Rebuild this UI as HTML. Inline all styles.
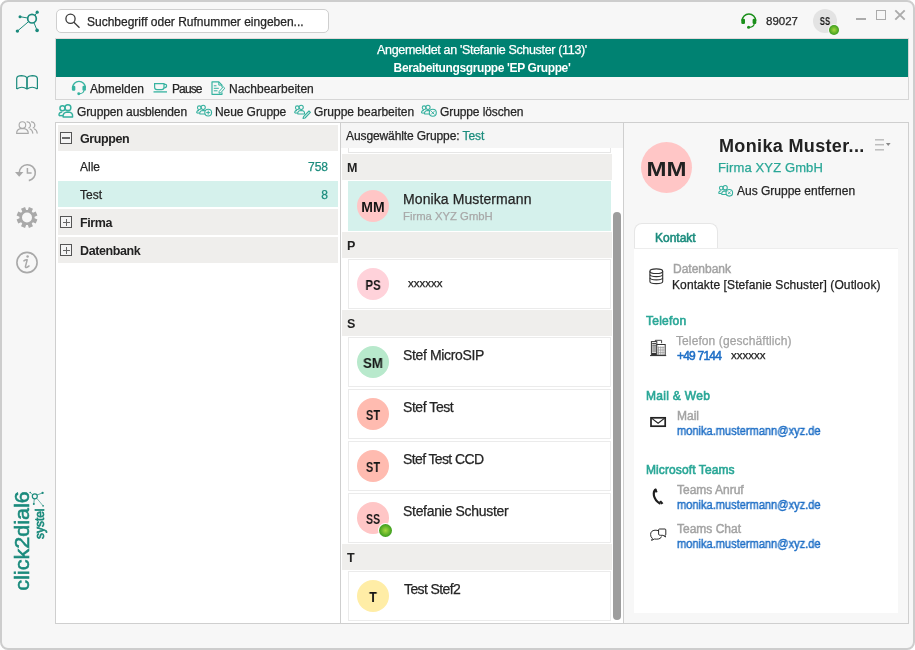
<!DOCTYPE html>
<html><head><meta charset="utf-8">
<style>
*{margin:0;padding:0;box-sizing:border-box}
html,body{width:915px;height:650px;overflow:hidden;background:#fff}
body{font-family:"Liberation Sans",sans-serif;position:relative}
#win{position:absolute;left:0;top:0;width:915px;height:650px;border:2px solid #cdcdcd;border-radius:8px;background:#f7f7f7;overflow:hidden}
.a{position:absolute}
.t{position:absolute;white-space:nowrap;line-height:1;will-change:transform;-webkit-text-stroke-width:0.25px}
.t[style*="font-weight:bold"]{-webkit-text-stroke-width:0}
.box{position:absolute}
svg{position:absolute;overflow:visible}
</style></head><body>
<div id="win"></div>

<!-- search -->
<div class="box" style="left:55.5px;top:9px;width:273.5px;height:24px;border:1px solid #cfcfcf;border-radius:5px;background:#fff"></div>
<svg style="left:0;top:0" width="915" height="40">
  <circle cx="70.5" cy="18.8" r="4.6" fill="none" stroke="#3a3a3a" stroke-width="1.3"/>
  <line x1="73.9" y1="22.3" x2="79.5" y2="27.7" stroke="#3a3a3a" stroke-width="1.3"/>
</svg>
<div class="t" style="left:87px;top:15.8px;font-size:12px;color:#252525">Suchbegriff oder Rufnummer eingeben...</div>

<!-- right header -->
<div class="t" style="left:766px;top:15.8px;font-size:11.5px;color:#252525">89027</div>
<div class="box" style="left:813px;top:9px;width:24px;height:24px;border-radius:50%;background:#e3e3e3"></div>
<div class="t" style="left:813px;width:24px;text-align:center;top:16.5px;font-size:10px;font-weight:bold;color:#151515;transform:scaleX(0.76)">SS</div>
<div class="box" style="left:828.1px;top:23.9px;width:12px;height:12px;border-radius:50%;background:#f7f7f7"></div>
<div class="box" style="left:829.1px;top:24.9px;width:10px;height:10px;border-radius:50%;background:radial-gradient(circle at 50% 50%,#a6d83e 0%,#62b22a 45%,#1f8f12 90%)"></div>
<!-- window controls -->
<div class="box" style="left:856px;top:18px;width:10px;height:2px;background:#ababab"></div>
<div class="box" style="left:876px;top:10px;width:10px;height:10px;border:1px solid #ababab"></div>
<svg style="left:0;top:0" width="915" height="40">
  <path d="M895.3 10.3 L904.7 19.7 M904.7 10.3 L895.3 19.7" stroke="#ababab" stroke-width="1.9" fill="none"/>
</svg>

<!-- banner + toolbar -->
<div class="box" style="left:55px;top:38px;width:854px;height:62px;border:1px solid #d6d6d6;border-top-color:#e6dada;background:#f7f7f7"></div>
<div class="box" style="left:56px;top:39px;width:852px;height:38px;background:#008272"></div>
<div class="t" style="left:56px;width:852px;text-align:center;top:44.4px;font-size:12.5px;letter-spacing:-0.33px;color:#fff">Angemeldet an 'Stefanie Schuster (113)'</div>
<div class="t" style="left:56px;width:852px;text-align:center;top:62px;font-size:12px;font-weight:bold;letter-spacing:-0.38px;color:#fff">Berabeitungsgruppe 'EP Gruppe'</div>

<div class="t" style="left:90px;top:83.3px;font-size:12px;color:#252525">Abmelden</div>
<div class="t" style="left:171.5px;top:83.3px;font-size:12px;letter-spacing:-0.9px;color:#252525">Pause</div>
<div class="t" style="left:229px;top:83.3px;font-size:12px;color:#252525">Nachbearbeiten</div>

<div class="t" style="left:77px;top:105.8px;font-size:12px;letter-spacing:-0.12px;color:#252525">Gruppen ausblenden</div>
<div class="t" style="left:215px;top:105.8px;font-size:12px;letter-spacing:-0.08px;color:#252525">Neue Gruppe</div>
<div class="t" style="left:313.5px;top:105.8px;font-size:12px;color:#252525">Gruppe bearbeiten</div>
<div class="t" style="left:440px;top:105.8px;font-size:12px;letter-spacing:-0.1px;color:#252525">Gruppe löschen</div>

<!-- main panel -->
<div class="box" style="left:55px;top:122px;width:854px;height:502px;border:1px solid #cfcfcf;background:#fff"></div>
<div class="box" style="left:340px;top:123px;width:1px;height:500px;background:#cfcfcf"></div>
<div class="box" style="left:623px;top:123px;width:1px;height:500px;background:#cfcfcf"></div>
<div class="box" style="left:624px;top:123px;width:284px;height:500px;background:#f7f7f7"></div>

<!-- left panel -->
<div class="box" style="left:58px;top:125px;width:280px;height:26px;background:#efeeec"></div>
<div class="box" style="left:58px;top:181px;width:280px;height:26px;background:#d5f1ec"></div>
<div class="box" style="left:58px;top:209px;width:280px;height:26px;background:#efeeec"></div>
<div class="box" style="left:58px;top:237px;width:280px;height:26px;background:#efeeec"></div>
<div class="t" style="left:79.5px;top:133px;font-size:12.5px;font-weight:bold;letter-spacing:-0.4px;color:#222">Gruppen</div>
<div class="t" style="left:80px;top:160.8px;font-size:12px;color:#252525">Alle</div>
<div class="t" style="left:288px;width:40px;text-align:right;top:160.8px;font-size:12px;color:#1b8c7d">758</div>
<div class="t" style="left:80px;top:189.1px;font-size:12px;color:#252525">Test</div>
<div class="t" style="left:288px;width:40px;text-align:right;top:189.1px;font-size:12px;color:#1b8c7d">8</div>
<div class="t" style="left:79.5px;top:216.9px;font-size:12.5px;font-weight:bold;letter-spacing:-0.4px;color:#222">Firma</div>
<div class="t" style="left:79.5px;top:244.9px;font-size:12.5px;font-weight:bold;letter-spacing:-0.4px;color:#222">Datenbank</div>


<div class="box" style="left:60px;top:132px;width:12px;height:12px;border:1px solid #555;background:#f4f4f4"></div>
<div class="box" style="left:62.3px;top:137.2px;width:7.5px;height:1.6px;background:#6a6a6a"></div>
<div class="box" style="left:60px;top:216px;width:12px;height:12px;border:1px solid #555;background:#f4f4f4"></div>
<div class="box" style="left:62.5px;top:221.5px;width:7px;height:1.1px;background:#666"></div>
<div class="box" style="left:65.5px;top:218.5px;width:1.1px;height:7px;background:#666"></div>
<div class="box" style="left:60px;top:244px;width:12px;height:12px;border:1px solid #555;background:#f4f4f4"></div>
<div class="box" style="left:62.5px;top:249.5px;width:7px;height:1.1px;background:#666"></div>
<div class="box" style="left:65.5px;top:246.5px;width:1.1px;height:7px;background:#666"></div>

<!-- middle panel -->
<div class="box" style="left:341px;top:123px;width:282px;height:25px;background:#f5f5f5"></div>
<div class="t" style="left:346px;top:129.8px;font-size:12px;letter-spacing:-0.1px;color:#252525">Ausgewählte Gruppe: <span style="color:#1b8c7d">Test</span></div>


<!-- list -->
<div class="box" style="left:348px;top:148px;width:263px;height:5px;border:1px solid #e6e6e6;border-top:none"></div>
<div class="box" style="left:342px;top:154px;width:270px;height:26px;background:#efeeec"></div>
<div class="t" style="left:347.3px;top:162px;font-size:12.5px;font-weight:bold;color:#222">M</div>
<div class="box" style="left:348px;top:181px;width:263px;height:50px;background:#d5f1ec;border:1px solid #d5f1ec"></div>
<div class="box" style="left:357px;top:190px;width:32px;height:32px;border-radius:50%;background:#ffc6c6"></div>
<div class="t" style="left:357px;width:32px;text-align:center;top:200.15px;font-size:14px;font-weight:bold;color:#151515;transform:scaleX(1.0)">MM</div>
<div class="t" style="left:402.8px;top:191.7px;font-size:14px;letter-spacing:0.1px;color:#252525">Monika Mustermann</div>
<div class="t" style="left:402.8px;top:210.5px;font-size:11.3px;color:#a8a8a8">Firma XYZ GmbH</div>
<div class="box" style="left:342px;top:232px;width:270px;height:26px;background:#efeeec"></div>
<div class="t" style="left:347.3px;top:240px;font-size:12.5px;font-weight:bold;color:#222">P</div>
<div class="box" style="left:348px;top:259px;width:263px;height:50px;background:#fff;border:1px solid #ebebeb"></div>
<div class="box" style="left:357px;top:268px;width:32px;height:32px;border-radius:50%;background:#ffd2da"></div>
<div class="t" style="left:357px;width:32px;text-align:center;top:278.15px;font-size:14px;font-weight:bold;color:#151515;transform:scaleX(0.82)">PS</div>
<div class="t" style="left:407.5px;top:278.3px;font-size:11.5px;color:#222">xxxxxx</div>
<div class="box" style="left:342px;top:310px;width:270px;height:26px;background:#efeeec"></div>
<div class="t" style="left:347.3px;top:318px;font-size:12.5px;font-weight:bold;color:#222">S</div>
<div class="box" style="left:348px;top:337px;width:263px;height:50px;background:#fff;border:1px solid #ebebeb"></div>
<div class="box" style="left:357px;top:346px;width:32px;height:32px;border-radius:50%;background:#b8e9cc"></div>
<div class="t" style="left:357px;width:32px;text-align:center;top:356.15px;font-size:14px;font-weight:bold;color:#151515;transform:scaleX(0.95)">SM</div>
<div class="t" style="left:402.8px;top:347.7px;font-size:14px;letter-spacing:-0.35px;color:#252525">Stef MicroSIP</div>
<div class="box" style="left:348px;top:389px;width:263px;height:50px;background:#fff;border:1px solid #ebebeb"></div>
<div class="box" style="left:357px;top:398px;width:32px;height:32px;border-radius:50%;background:#ffbbb0"></div>
<div class="t" style="left:357px;width:32px;text-align:center;top:408.15px;font-size:14px;font-weight:bold;color:#151515;transform:scaleX(0.79)">ST</div>
<div class="t" style="left:402.8px;top:399.7px;font-size:14px;letter-spacing:-0.44px;color:#252525">Stef Test</div>
<div class="box" style="left:348px;top:441px;width:263px;height:50px;background:#fff;border:1px solid #ebebeb"></div>
<div class="box" style="left:357px;top:450px;width:32px;height:32px;border-radius:50%;background:#ffbbb0"></div>
<div class="t" style="left:357px;width:32px;text-align:center;top:460.15px;font-size:14px;font-weight:bold;color:#151515;transform:scaleX(0.79)">ST</div>
<div class="t" style="left:402.8px;top:451.7px;font-size:14px;letter-spacing:-0.62px;color:#252525">Stef Test CCD</div>
<div class="box" style="left:348px;top:493px;width:263px;height:50px;background:#fff;border:1px solid #ebebeb"></div>
<div class="box" style="left:357px;top:502px;width:32px;height:32px;border-radius:50%;background:#ffc6c6"></div>
<div class="t" style="left:357px;width:32px;text-align:center;top:512.15px;font-size:14px;font-weight:bold;color:#151515;transform:scaleX(0.76)">SS</div>
<div class="box" style="left:377.5px;top:522.5px;width:15px;height:15px;border-radius:50%;background:#fff"></div>
<div class="box" style="left:378.5px;top:523.5px;width:13px;height:13px;border-radius:50%;background:radial-gradient(circle at 50% 50%,#a6d83e 0%,#62b22a 45%,#1f8f12 90%)"></div>
<div class="t" style="left:402.8px;top:503.7px;font-size:14px;letter-spacing:-0.3px;color:#252525">Stefanie Schuster</div>
<div class="box" style="left:342px;top:544px;width:270px;height:26px;background:#efeeec"></div>
<div class="t" style="left:347.3px;top:552px;font-size:12.5px;font-weight:bold;color:#222">T</div>
<div class="box" style="left:348px;top:571px;width:263px;height:50px;background:#fff;border:1px solid #ebebeb"></div>
<div class="box" style="left:357px;top:580px;width:32px;height:32px;border-radius:50%;background:#ffeda6"></div>
<div class="t" style="left:357px;width:32px;text-align:center;top:590.15px;font-size:14px;font-weight:bold;color:#151515;transform:scaleX(0.88)">T</div>
<div class="t" style="left:403.8px;top:581.7px;font-size:14px;letter-spacing:-0.6px;color:#252525">Test Stef2</div>
<div class="box" style="left:613px;top:212px;width:8px;height:408px;border-radius:4px;background:#9d9d9d"></div>

<!-- right panel -->
<div class="box" style="left:641px;top:142px;width:51px;height:51px;border-radius:50%;background:#ffc6c6"></div>
<div class="t" style="left:641px;width:51px;text-align:center;top:158.5px;font-size:20px;font-weight:bold;letter-spacing:0px;color:#222;transform:scaleX(1.2);transform-origin:center">MM</div>
<div class="t" style="left:718.5px;top:136.5px;font-size:18px;font-weight:bold;letter-spacing:0.35px;color:#222">Monika Muster...</div>
<div class="t" style="left:718.3px;top:161px;font-size:13px;letter-spacing:0.12px;color:#2aa797">Firma XYZ GmbH</div>
<div class="t" style="left:736.7px;top:184.8px;font-size:12px;color:#252525">Aus Gruppe entfernen</div>

<div class="box" style="left:634px;top:223px;width:84px;height:26px;background:#fff;border:1px solid #e6e6e6;border-bottom:none;border-radius:8px 8px 0 0"></div>
<div class="box" style="left:634px;top:248px;width:264px;height:365px;background:#fff;border-top:1px solid #ededed"></div>
<div class="t" style="left:655.2px;top:231.8px;font-size:12px;-webkit-text-stroke-width:0.55px;color:#1b8c7d">Kontakt</div>

<div class="t" style="left:672.8px;top:262.5px;font-size:12px;color:#a3a3a3;-webkit-text-stroke-width:0.45px">Datenbank</div>
<div class="t" style="left:672.2px;top:279.2px;font-size:12px;letter-spacing:0.1px;color:#222">Kontakte [Stefanie Schuster] (Outlook)</div>

<div class="t" style="left:646.4px;top:314.8px;font-size:12px;-webkit-text-stroke-width:0.6px;letter-spacing:0.25px;color:#2aa797">Telefon</div>
<div class="t" style="left:676.4px;top:335.1px;font-size:12px;letter-spacing:0.1px;color:#a3a3a3">Telefon (geschäftlich)</div>
<div class="t" style="left:676.8px;top:350.2px;font-size:12px;-webkit-text-stroke-width:0.55px;letter-spacing:-0.78px;color:#1f6fc6">+49 7144</div>
<div class="t" style="left:730.6px;top:350.2px;font-size:11.5px;color:#222">xxxxxx</div>

<div class="t" style="left:646.4px;top:389.9px;font-size:12px;-webkit-text-stroke-width:0.6px;letter-spacing:0.3px;color:#2aa797">Mail &amp; Web</div>
<div class="t" style="left:677px;top:410.2px;font-size:12px;color:#a3a3a3;-webkit-text-stroke-width:0.45px">Mail</div>
<div class="t" style="left:676.5px;top:425.4px;font-size:12px;color:#1f6fc6;-webkit-text-stroke-width:0.45px;transform:scaleX(0.922);transform-origin:0 0">monika.mustermann@xyz.de</div>

<div class="t" style="left:646.4px;top:464px;font-size:12px;-webkit-text-stroke-width:0.6px;letter-spacing:0.1px;color:#2aa797">Microsoft Teams</div>
<div class="t" style="left:677px;top:484.1px;font-size:12px;color:#a3a3a3;-webkit-text-stroke-width:0.45px">Teams Anruf</div>
<div class="t" style="left:676.5px;top:499.4px;font-size:12px;color:#1f6fc6;-webkit-text-stroke-width:0.45px;transform:scaleX(0.922);transform-origin:0 0">monika.mustermann@xyz.de</div>
<div class="t" style="left:677px;top:522.8px;font-size:12px;color:#a3a3a3;-webkit-text-stroke-width:0.45px">Teams Chat</div>
<div class="t" style="left:676.5px;top:538px;font-size:12px;color:#1f6fc6;-webkit-text-stroke-width:0.45px;transform:scaleX(0.922);transform-origin:0 0">monika.mustermann@xyz.de</div>



<!-- icons overlay -->
<svg style="left:0;top:0" width="915" height="650" viewBox="0 0 915 650">
<defs>
  <symbol id="hs" viewBox="0 0 16 16" overflow="visible">
    <path d="M1.3 7.6 A6.8 6.8 0 0 1 14.9 7.6" fill="none" stroke="currentColor" stroke-width="1.5"/>
    <rect x="0.5" y="5.5" width="3.7" height="5.4" rx="1.3" fill="currentColor"/>
    <rect x="11.8" y="5.5" width="3.7" height="5.4" rx="1.3" fill="currentColor"/>
    <path d="M13.4 10.6 Q13 13.6 8.6 14.1" fill="none" stroke="currentColor" stroke-width="1.2"/>
    <circle cx="7.8" cy="14.1" r="1.55" fill="currentColor"/>
  </symbol>
  <symbol id="grp" viewBox="0 0 12 10" overflow="visible">
    <circle cx="3.2" cy="3" r="1.9" fill="none" stroke="currentColor" stroke-width="1.1"/>
    <path d="M0.6 8.6 Q0.3 6 3 5.8" fill="none" stroke="currentColor" stroke-width="1.1"/>
    <path d="M0.6 8.6 H3.6" fill="none" stroke="currentColor" stroke-width="1.1"/>
    <circle cx="7.3" cy="2.6" r="2.2" fill="none" stroke="currentColor" stroke-width="1.1"/>
    <path d="M3.7 9.6 Q3.3 6 7.3 5.9 Q11.2 6 10.8 9.6 Z" fill="none" stroke="currentColor" stroke-width="1.1" stroke-linejoin="round"/>
  </symbol>
</defs>
<!-- app logo -->
<g fill="#1a8a7c" stroke="#1a8a7c">
  <circle cx="32" cy="18.7" r="4.3" fill="none" stroke-width="1.7"/>
  <line x1="20" y1="16.7" x2="27.7" y2="18" stroke-width="1"/>
  <line x1="17.4" y1="31.1" x2="28.6" y2="21.6" stroke-width="1"/>
  <line x1="37.2" y1="12.2" x2="35" y2="15.3" stroke-width="1"/>
  <line x1="37.1" y1="30.4" x2="34" y2="22.8" stroke-width="1"/>
  <circle cx="20" cy="16.7" r="1.5" stroke="none"/>
  <circle cx="17.4" cy="31.1" r="1.7" stroke="none"/>
  <circle cx="37.2" cy="12.2" r="1.6" stroke="none"/>
  <circle cx="37.1" cy="30.4" r="1.8" stroke="none"/>
</g>
<!-- book -->
<g fill="none" stroke="#1a8a7c" stroke-width="1.2" stroke-linejoin="round">
  <path d="M16.7 89 V78.3 Q17 75.6 21.8 75.6 Q25.6 75.8 27 77.6 Q28.4 75.8 32.2 75.6 Q37 75.6 37.4 78.3 V89"/>
  <path d="M16.7 89 Q21.8 85.5 27 89 Q32.2 85.5 37.4 89"/>
  <line x1="27" y1="77.6" x2="27" y2="89" stroke-width="1.7"/>
</g>
<!-- contacts -->
<g fill="none" stroke="#a9a9a9" stroke-width="1.1">
  <circle cx="22.4" cy="125" r="3.3"/>
  <path d="M16.6 133.4 Q16.6 129.4 20.5 128.6 H24.3 Q28.3 129.4 28.3 133.4 Z" stroke-linejoin="round"/>
  <path d="M26.6 121.9 A3.3 3.3 0 0 1 28.4 128.2"/>
  <path d="M29.6 128.8 Q32.6 130 32.9 133.6"/>
  <path d="M31 121.9 A3.3 3.3 0 0 1 32.8 128.2"/>
  <path d="M34 128.8 Q37 130 37.3 133.6"/>
</g>
<!-- history -->
<g fill="none" stroke="#a9a9a9" stroke-width="1.6">
  <path d="M19.3 172.3 A8 8 0 1 1 28.8 180.6"/>
  <path d="M27.4 168 V173 H31.6" stroke-width="1.5"/>
  <path d="M15 172 H23.4 L19.2 176.8 Z" fill="#a9a9a9" stroke="none"/>
</g>
<!-- gear -->
<path d="M27.86 209.95 L28.93 207.08 L33.00 208.76 L31.73 211.55 L32.95 212.77 L35.74 211.50 L37.42 215.57 L34.55 216.64 L34.55 218.36 L37.42 219.43 L35.74 223.50 L32.95 222.23 L31.73 223.45 L33.00 226.24 L28.93 227.92 L27.86 225.05 L26.14 225.05 L25.07 227.92 L21.00 226.24 L22.27 223.45 L21.05 222.23 L18.26 223.50 L16.58 219.43 L19.45 218.36 L19.45 216.64 L16.58 215.57 L18.26 211.50 L21.05 212.77 L22.27 211.55 L21.00 208.76 L25.07 207.08 L26.14 209.95 Z M32.0 217.5 A5.0 5.0 0 1 0 22.0 217.5 A5.0 5.0 0 1 0 32.0 217.5 Z" fill="#a9a9a9" fill-rule="evenodd"/>
<!-- info -->
<g fill="none" stroke="#a9a9a9">
  <circle cx="27" cy="262.5" r="10.1" stroke-width="1.6"/>
  <circle cx="27.6" cy="256.4" r="1.25" fill="#a9a9a9" stroke="none"/>
  <path d="M23.9 260.9 Q25.5 259.6 27.2 259.8 L25.4 266.6 Q25.3 268 27 267.3 L29 266" stroke-width="1.5" stroke-linecap="round" stroke-linejoin="round"/>
</g>
<!-- logo bottom -->
<g transform="translate(28.6,590.7) rotate(-90)">
  <text x="0" y="0" font-family="Liberation Sans" font-size="20.5" fill="#1a8a7c" stroke="#1a8a7c" stroke-width="0.55" textLength="99.5" lengthAdjust="spacingAndGlyphs">click2dial6</text>
</g>
<g transform="translate(44,539) rotate(-90)">
  <text x="0" y="0" font-family="Liberation Sans" font-size="12.5" fill="#1a8a7c" stroke="#1a8a7c" stroke-width="0.7" textLength="30.5" lengthAdjust="spacingAndGlyphs">systel</text>
</g>
<g fill="#1a8a7c" stroke="#1a8a7c">
  <circle cx="34.8" cy="496.3" r="2.5" fill="none" stroke-width="1.2"/>
  <line x1="36.6" y1="498.1" x2="43.1" y2="505.9" stroke-width="0.6"/>
  <line x1="37" y1="495" x2="42.6" y2="492.9" stroke-width="0.7"/>
  <line x1="34.3" y1="498.8" x2="33.8" y2="504" stroke-width="0.7"/>
  <line x1="32.6" y1="494.6" x2="30.2" y2="492.5" stroke-width="0.6"/>
  <circle cx="42.6" cy="492.9" r="1.15" stroke="none"/>
  <circle cx="33.8" cy="504" r="1" stroke="none"/>
  <circle cx="30.2" cy="492.5" r="0.8" stroke="none"/>
  <circle cx="43.1" cy="505.9" r="0.8" stroke="none"/>
</g>

<!-- top headset -->
<use href="#hs" x="740.8" y="13.2" width="16" height="16" style="color:#1a8f1a"/>
<!-- toolbar headset -->
<use href="#hs" x="71.4" y="80.6" width="15" height="15" style="color:#36b3a0"/>
<!-- cup -->
<g fill="none" stroke="#36b3a0" stroke-width="1.2">
  <path d="M154.6 83.6 H164 V87.2 Q164 89.6 161.6 89.6 H157 Q154.6 89.6 154.6 87.2 Z"/>
  <path d="M164 84.3 H165.4 Q166.6 84.3 166.6 85.8 Q166.6 87.8 164 88"/>
  <line x1="153.5" y1="91.9" x2="167" y2="91.9" stroke-width="1.3"/>
</g>
<!-- doc -->
<g fill="none" stroke="#36b3a0" stroke-width="1.2" stroke-linejoin="round">
  <path d="M222 87.3 V85.1 L218.8 81.9 H212 V94.3 H222 V92.4"/>
  <path d="M218.8 81.9 V85.1 H222" stroke-width="1"/>
  <path d="M213.8 85.8 H216.5 M213.8 88.3 H218.8 M213.8 90.8 H217.5" stroke-width="1"/>
  <path d="M219.2 91.4 L223.3 86.8 L224.8 88.2 L220.8 92.8 L219 93.2 Z" stroke-width="1"/>
</g>

<!-- group toolbar -->
<use href="#grp" x="58.2" y="104.2" width="16" height="13.3" style="color:#35b09e"/>
<g style="color:#35b09e">
  <use href="#grp" x="196.2" y="104.8" width="11.5" height="9.6"/>
  <circle cx="208.2" cy="112.6" r="3.4" fill="#f7f7f7" stroke="#35b09e" stroke-width="1.1"/>
  <path d="M208.2 110.6 V114.6 M206.2 112.6 H210.2" stroke="#35b09e" stroke-width="1"/>
  <use href="#grp" x="294.2" y="104.8" width="11.5" height="9.6"/>
  <path d="M303.6 116.6 L309 111 L310.4 112.4 L305 118 L303 118.4 Z" fill="#f7f7f7" stroke="#35b09e" stroke-width="1.1" stroke-linejoin="round"/>
  <use href="#grp" x="421" y="104.8" width="11.5" height="9.6"/>
  <circle cx="432.8" cy="112.8" r="3.5" fill="#f7f7f7" stroke="#35b09e" stroke-width="1.1"/>
  <path d="M431.2 111.2 L434.4 114.4 M434.4 111.2 L431.2 114.4" stroke="#35b09e" stroke-width="1"/>
</g>

<!-- aus gruppe entfernen -->
<g style="color:#35b09e">
  <use href="#grp" x="718.2" y="185.2" width="11.5" height="9.6"/>
  <circle cx="729.3" cy="192.8" r="3.3" fill="#f7f7f7" stroke="#35b09e" stroke-width="1.1"/>
  <path d="M728 191.5 L730.6 194.1 M730.6 191.5 L728 194.1" stroke="#35b09e" stroke-width="0.9"/>
</g>
<!-- menu icon -->
<g stroke="#bdbdbd" stroke-width="1.5">
  <line x1="875" y1="139.8" x2="884" y2="139.8"/>
  <line x1="875" y1="144.7" x2="884" y2="144.7"/>
  <line x1="875" y1="149.8" x2="884" y2="149.8"/>
</g>
<path d="M885.9 143 H890.6 L888.25 146 Z" fill="#8a8a8a"/>

<!-- database -->
<g fill="none" stroke="#333" stroke-width="1.1">
  <ellipse cx="656.3" cy="271.2" rx="6.4" ry="2.3"/>
  <path d="M649.9 271.2 V281.4 Q649.9 283.6 656.3 283.6 Q662.7 283.6 662.7 281.4 V271.2"/>
  <path d="M649.9 274.6 Q650.5 276.6 656.3 276.6 Q662.1 276.6 662.7 274.6"/>
  <path d="M649.9 277.9 Q650.5 279.9 656.3 279.9 Q662.1 279.9 662.7 277.9"/>
</g>
<!-- building -->
<g fill="none" stroke="#333">
  <rect x="651.4" y="341.6" width="5.4" height="13.6" stroke-width="1" fill="#fff"/>
  <path d="M652.2 343.5 H656 M652.2 345.2 H656 M652.2 347 H656 M652.2 349 H656 M652.2 351 H656" stroke-width="0.9"/>
  <rect x="652" y="352.8" width="4.2" height="2.2" fill="#333" stroke="none"/>
  <rect x="656.8" y="344.5" width="8.4" height="10.7" stroke-width="1" fill="#fff"/>
  <path d="M658.6 346.5 V355 M660.8 346.5 V355 M663 346.5 V355" stroke="#888" stroke-width="0.8"/>
  <path d="M657.4 347.4 H664.6 M657.4 350 H664.6 M657.4 352.6 H664.6" stroke="#999" stroke-width="0.7"/>
  <path d="M655.3 341.6 V340.3 H661.6 V343.2" stroke-width="0.9"/>
  <line x1="650" y1="355.6" x2="666.2" y2="355.6" stroke-width="1"/>
</g>
<!-- mail -->
<g fill="none" stroke="#222" stroke-width="1.7">
  <rect x="651" y="417.8" width="14.2" height="8.4"/>
  <path d="M651.8 418.4 L658.1 423.3 L664.4 418.4" stroke-width="1.2"/>
</g>
<!-- phone -->
<g fill="#1e1e1e" stroke="none">
  <path d="M655.4 489.6 Q653.2 491.4 653.9 495.6 Q655 500.6 659.6 503.4" fill="none" stroke="#1e1e1e" stroke-width="2.1" stroke-linecap="round"/>
  <path d="M654.3 489.2 L656.2 488.6 L657.6 491.9 L655.6 492.8 Z"/>
  <path d="M659.2 501.6 L661 500.4 L663.4 503.2 L661.4 504.6 Z"/>
</g>
<!-- chat -->
<g fill="none" stroke="#222" stroke-width="0.95" stroke-linejoin="round">
  <path d="M659 531 Q657 530 655 530.2 Q650.6 530.6 650.6 534.6 Q650.6 537.3 652.4 538.3 L651.6 540.4 L654.4 539 Q656.2 539.3 658.4 539 Q661 538.7 661.4 536.5"/>
  <path d="M659.4 529 H665 Q665.8 529 665.8 530 V534.3 Q665.8 535.3 665 535.3 H664.8 L665.6 537 L663 535.3 H660.6 Q658.6 535.3 658.6 534.3 V530 Q658.6 529 659.4 529 Z"/>
</g>
</svg>
</body></html>
